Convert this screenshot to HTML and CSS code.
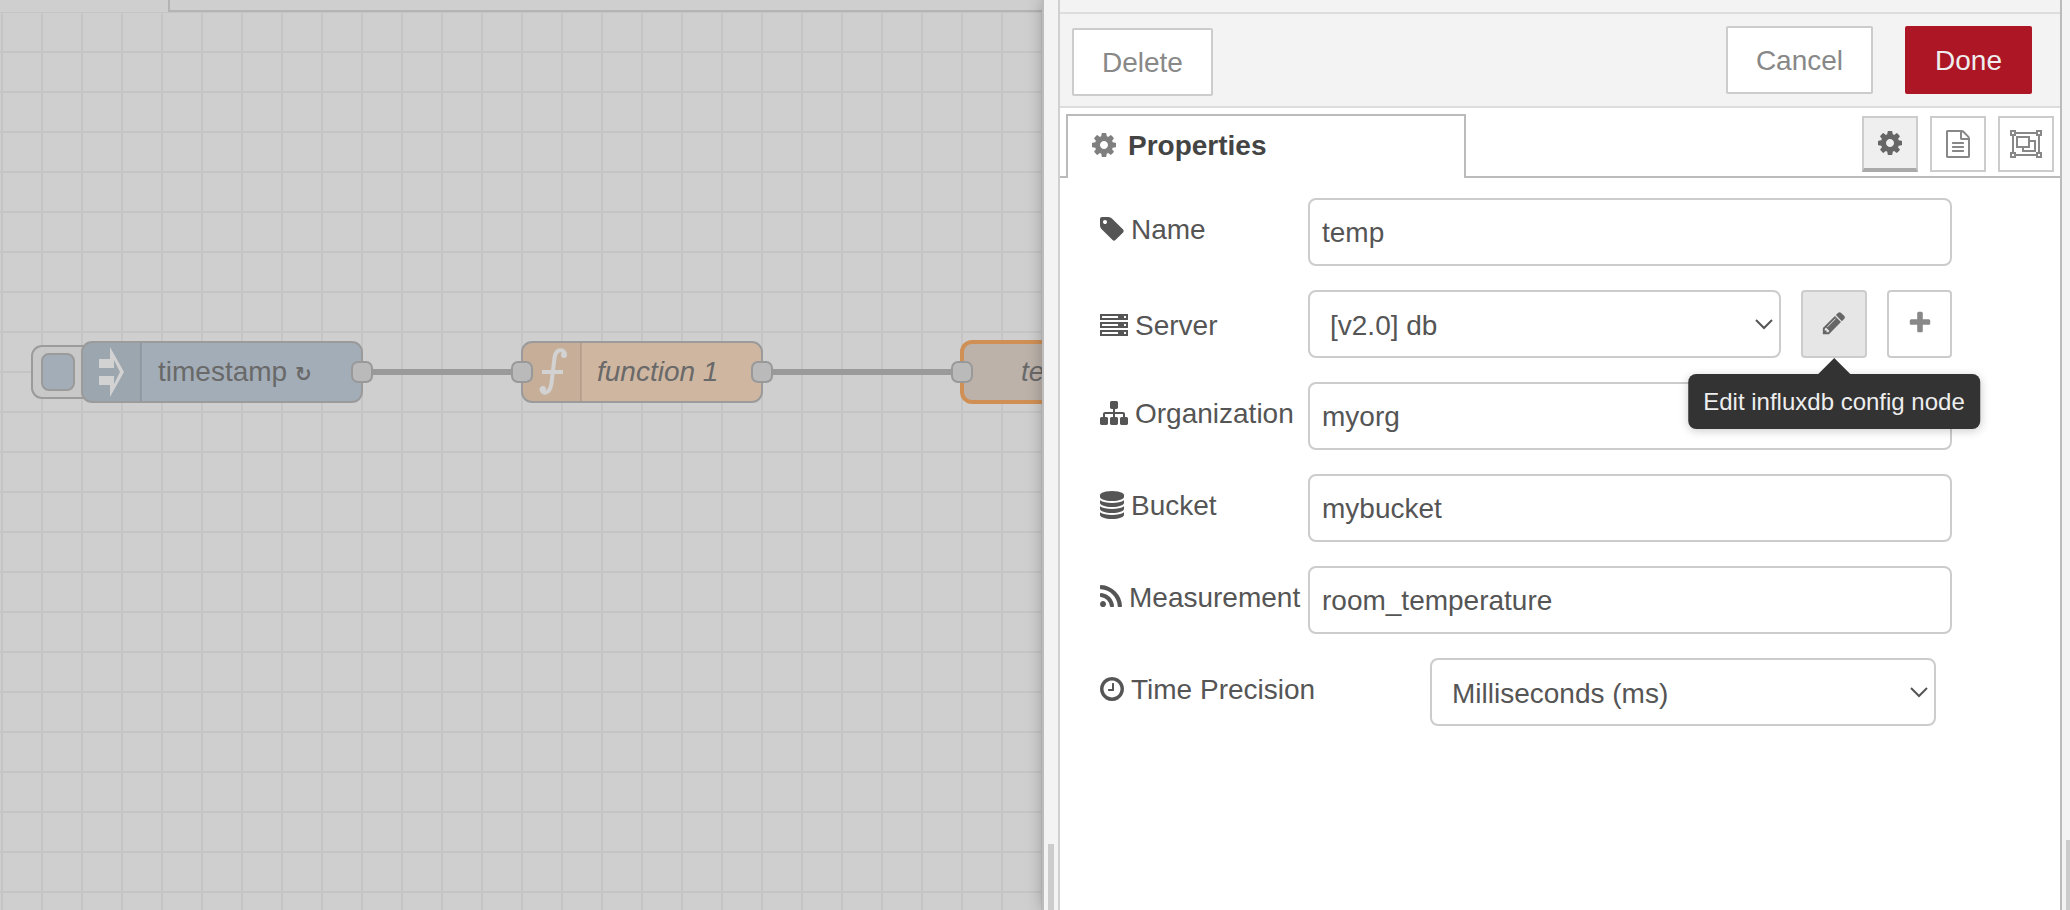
FILE: index.html
```html
<!DOCTYPE html>
<html lang="en">
<head>
<meta charset="utf-8">
<title>Edit influxdb out node</title>
<link rel="stylesheet" href="styles.css">
</head>
<body>
<main class="workspace">
  <div class="flow-tabs"><span class="flow-tab-active"></span><span class="flow-tab-rest"></span></div>
  <svg class="canvas" role="img" aria-label="Flow: timestamp, function 1, temp">
    <g transform="translate(0 -12)">
      <g class="wire">
        <path d="M362 372H522M762 372H962"/>
      </g>
      <g class="outline">
        <rect class="button-base" x="32" y="346" width="70" height="52" rx="10"/>
        <rect class="blue" x="42" y="354" width="32" height="36" rx="7"/>
        <rect class="blue" x="82" y="342" width="280" height="60" rx="10"/>
        <rect class="orange" x="522" y="342" width="240" height="60" rx="10"/>
        <rect class="sand selected" x="962" y="342" width="240" height="60" rx="10"/>
      </g>
      <path class="shade" d="M92 343H141V401H92a9 9 0 0 1-9-9V352a9 9 0 0 1 9-9zM532 343H581V401H532a9 9 0 0 1-9-9V352a9 9 0 0 1 9-9z"/>
      <path class="divider" d="M141 343V401M581 343V401"/>
      <path class="glyph" d="M99 359H110V347L124 372L110 397V385H99V376H114V384L120 372L114 360V368H99Z"/>
      <path class="glyph-line" d="M565 356C566 349 556 347 554.500 358L551.500 383C550 395 541 395 541.500 388M542 372H563"/>
      <circle class="glyph" cx="564" cy="355" r="3"/>
      <circle class="glyph" cx="543" cy="389" r="3"/>
      <g class="port">
        <rect x="352" y="362" width="20" height="20" rx="6"/>
        <rect x="512" y="362" width="20" height="20" rx="6"/>
        <rect x="752" y="362" width="20" height="20" rx="6"/>
        <rect x="952" y="362" width="20" height="20" rx="6"/>
      </g>
      <text class="node-label" x="158" y="381">timestamp <tspan class="repeat">↻</tspan></text>
      <text class="node-label italic" x="597" y="381">function 1</text>
      <text class="node-label italic" x="1021" y="381">temp</text>
    </g>
  </svg>
</main>
<div class="separator"><span class="grip"></span></div>
<section class="tray">
  <div class="tray-header"></div>
  <div class="toolbar">
    <button type="button" class="btn btn-delete">Delete</button>
    <div class="toolbar-end">
      <button type="button" class="btn">Cancel</button>
      <button type="button" class="btn btn-primary">Done</button>
    </div>
  </div>
  <div class="tabs">
    <button type="button" class="tab">
      <svg class="icon" viewBox="128 0 1536 1792" width="24" height="28"><path d="M1152 896q0-106-75-181t-181-75-181 75-75 181 75 181 181 75 181-75 75-181zm512-109v222q0 12-8 23t-20 13l-185 28q-19 54-39 91 35 50 107 138 10 12 10 25t-9 23q-27 37-99 108t-94 71q-12 0-26-9l-138-108q-44 23-91 38-16 136-29 186-7 28-36 28h-222q-14 0-24.500-8.500t-11.500-21.500l-28-184q-49-16-90-37l-141 107q-10 9-25 9-14 0-25-11-126-114-165-168-7-10-7-23 0-12 8-23 15-21 51-66.500t54-70.500q-27-50-41-99l-183-27q-13-2-21-12.500t-8-23.500v-222q0-12 8-23t19-13l186-28q14-46 39-92-40-57-107-138-10-12-10-24 0-10 9-23 26-36 98.500-107.500t94.500-71.500q13 0 26 10l138 107q44-23 91-38 16-136 29-186 7-28 36-28h222q14 0 24.500 8.500t11.500 21.500l28 184q49 16 90 37l142-107q9-9 24-9 13 0 25 10 129 119 165 170 7 8 7 22 0 12-8 23-15 21-51 66.500t-54 70.500q26 50 41 98l183 28q13 2 21 12.500t8 23.500z"/></svg>
      <span class="caption">Properties</span>
    </button>
    <div class="tab-tools">
      <button type="button" class="tool tool-active" aria-label="Properties">
        <svg class="icon" viewBox="128 0 1536 1792" width="24" height="28"><path d="M1152 896q0-106-75-181t-181-75-181 75-75 181 75 181 181 75 181-75 75-181zm512-109v222q0 12-8 23t-20 13l-185 28q-19 54-39 91 35 50 107 138 10 12 10 25t-9 23q-27 37-99 108t-94 71q-12 0-26-9l-138-108q-44 23-91 38-16 136-29 186-7 28-36 28h-222q-14 0-24.500-8.500t-11.500-21.500l-28-184q-49-16-90-37l-141 107q-10 9-25 9-14 0-25-11-126-114-165-168-7-10-7-23 0-12 8-23 15-21 51-66.500t54-70.500q-27-50-41-99l-183-27q-13-2-21-12.500t-8-23.500v-222q0-12 8-23t19-13l186-28q14-46 39-92-40-57-107-138-10-12-10-24 0-10 9-23 26-36 98.500-107.500t94.500-71.500q13 0 26 10l138 107q44-23 91-38 16-136 29-186 7-28 36-28h222q14 0 24.500 8.500t11.500 21.500l28 184q49 16 90 37l142-107q9-9 24-9 13 0 25 10 129 119 165 170 7 8 7 22 0 12-8 23-15 21-51 66.500t-54 70.500q26 50 41 98l183 28q13 2 21 12.500t8 23.500z"/></svg>
      </button>
      <button type="button" class="tool" aria-label="Description">
        <svg class="icon" viewBox="128 0 1536 1792" width="24" height="28"><path d="M1596 380q28 28 48 76t20 88v1152q0 40-28 68t-68 28h-1344q-40 0-68-28t-28-68v-1600q0-40 28-68t68-28h896q40 0 88 20t76 48zm-444-244v376h376q-10-29-22-41l-313-313q-12-12-41-22zm384 1528v-1024h-416q-40 0-68-28t-28-68v-416h-768v1536h1280zm-1024-864q0-14 9-23t23-9h704q14 0 23 9t9 23v64q0 14-9 23t-23 9h-704q-14 0-23-9t-9-23v-64zm736 224q14 0 23 9t9 23v64q0 14-9 23t-23 9h-704q-14 0-23-9t-9-23v-64q0-14 9-23t23-9h704zm0 256q14 0 23 9t9 23v64q0 14-9 23t-23 9h-704q-14 0-23-9t-9-23v-64q0-14 9-23t23-9h704z"/></svg>
      </button>
      <button type="button" class="tool" aria-label="Appearance">
        <svg class="icon-line" viewBox="0 0 32 28" width="32" height="28"><path d="M1 1h4v4H1zM27 1h4v4h-4zM1 23h4v4H1zM27 23h4v4h-4zM6 3h20M6 25h20M3 6v16M29 6v16M7 7h12v10H7zM20 11h5v10H13v-3"/></svg>
      </button>
    </div>
  </div>
  <form class="form">
    <div class="row">
      <label class="label" for="name">
        <svg class="icon" viewBox="128 0 1536 1792" width="24" height="28"><path d="M576 448q0-53-37.500-90.500t-90.500-37.500-90.500 37.500-37.500 90.500 37.500 90.500 90.500 37.500 90.500-37.500 37.500-90.500zm1067 576q0 53-37 90l-491 492q-39 37-91 37-53 0-90-37l-715-716q-38-37-64.500-101t-26.500-117v-416q0-52 38-90t90-38h416q53 0 117 26.500t102 64.500l715 714q37 39 37 91z"/></svg>
        <span class="caption">Name</span></label>
      <input class="field" id="name" type="text" value="temp">
    </div>
    <div class="row">
      <label class="label label-server" for="server">
        <svg class="icon" viewBox="0 0 28 28" width="28" height="28"><path fill-rule="evenodd" d="M0 3h28v6H0zM2 5v2h16V5zM24 5v2h2V5zM0 11h28v6H0zM2 13v2h16v-2zM24 13v2h2v-2zM0 19h28v6H0zM2 21v2h16v-2zM24 21v2h2v-2z"/></svg>
        <span class="caption">Server</span></label>
      <div class="select-box">
        <select class="field select" id="server"><option>[v2.0] db</option></select>
        <svg class="chevron" viewBox="0 0 18 12" width="18" height="12"><path d="M1 1l8 8 8-8"/></svg>
      </div>
      <div class="edit-box">
        <button type="button" class="square square-hover" aria-label="Edit" aria-describedby="tip">
          <svg class="icon" viewBox="0 0 1792 1792" width="26" height="26"><path d="M491 1536l91-91-235-235-91 91v107h128v128h107zm523-928q0-22-22-22-10 0-17 7l-542 542q-7 7-7 17 0 22 22 22 10 0 17-7l542-542q7-7 7-17zm-54-192l416 416-832 832h-416v-416zm683 96q0 53-37 90l-166 166-416-416 166-165q36-38 90-38 53 0 91 38l235 234q37 39 37 91z"/></svg>
        </button>
        <div class="tooltip" id="tip" role="tooltip">Edit influxdb config node</div>
      </div>
      <button type="button" class="square" aria-label="Add">
        <svg class="icon" viewBox="0 0 1792 1792" width="26" height="26"><path d="M1600 736v192q0 40-28 68t-68 28h-416v416q0 40-28 68t-68 28h-192q-40 0-68-28t-28-68v-416h-416q-40 0-68-28t-28-68v-192q0-40 28-68t68-28h416v-416q0-40 28-68t68-28h192q40 0 68 28t28 68v416h416q40 0 68 28t28 68z"/></svg>
      </button>
    </div>
    <div class="row">
      <label class="label" for="org">
        <svg class="icon" viewBox="0 0 1792 1792" width="28" height="28"><path d="M1792 1248v320q0 40-28 68t-68 28h-320q-40 0-68-28t-28-68v-320q0-40 28-68t68-28h96v-192h-512v192h96q40 0 68 28t28 68v320q0 40-28 68t-68 28h-320q-40 0-68-28t-28-68v-320q0-40 28-68t68-28h96v-192h-512v192h96q40 0 68 28t28 68v320q0 40-28 68t-68 28h-320q-40 0-68-28t-28-68v-320q0-40 28-68t68-28h96v-192q0-52 38-90t90-38h512v-192h-96q-40 0-68-28t-28-68v-320q0-40 28-68t68-28h320q40 0 68 28t28 68v320q0 40-28 68t-68 28h-96v192h512q52 0 90 38t38 90v192h96q40 0 68 28t28 68z"/></svg>
        <span class="caption">Organization</span></label>
      <input class="field" id="org" type="text" value="myorg">
    </div>
    <div class="row">
      <label class="label" for="bucket">
        <svg class="icon" viewBox="128 0 1536 1792" width="24" height="28"><path d="M896 768q237 0 443-43t325-127v170q0 69-103 128t-280 93.500-385 34.500-385-34.500-280-93.500-103-128v-170q119 84 325 127t443 43zm0 768q237 0 443-43t325-127v170q0 69-103 128t-280 93.500-385 34.500-385-34.500-280-93.500-103-128v-170q119 84 325 127t443 43zm0-384q237 0 443-43t325-127v170q0 69-103 128t-280 93.500-385 34.500-385-34.500-280-93.500-103-128v-170q119 84 325 127t443 43zm0-1152q208 0 385 34.500t280 93.500 103 128v128q0 69-103 128t-280 93.500-385 34.500-385-34.500-280-93.500-103-128v-128q0-69 103-128t280-93.500 385-34.500z"/></svg>
        <span class="caption">Bucket</span></label>
      <input class="field" id="bucket" type="text" value="mybucket">
    </div>
    <div class="row">
      <label class="label" for="measurement">
        <svg class="icon" viewBox="192 0 1408 1792" width="22" height="28"><path d="M576 1344q0 80-56 136t-136 56-136-56-56-136 56-136 136-56 136 56 56 136zm512 123q2 28-17 48-18 21-47 21h-135q-25 0-43-16.500t-20-41.500q-22-229-184.500-391.500t-391.500-184.500q-25-2-41.500-20t-16.500-43v-135q0-29 21-47 17-17 43-17h5q160 13 306 80.500t259 181.500q114 113 181.500 259t80.500 306zm512 2q2 27-18 47-18 20-46 20h-143q-26 0-44.500-17.500t-19.500-42.500q-12-215-101-408.500t-231.500-336-336-231.500-408.500-102q-25-1-42.500-19.500t-17.500-43.500v-143q0-28 20-46 18-18 44-18h3q262 13 501.500 120t425.500 294q187 186 294 425.500t120 501.500z"/></svg>
        <span class="caption">Measurement</span></label>
      <input class="field" id="measurement" type="text" value="room_temperature">
    </div>
    <div class="row row-precision">
      <label class="label label-wide" for="precision">
        <svg class="icon" viewBox="128 0 1536 1792" width="24" height="28"><path d="M1024 544v448q0 14-9 23t-23 9h-320q-14 0-23-9t-9-23v-64q0-14 9-23t23-9h224v-352q0-14 9-23t23-9h64q14 0 23 9t9 23zm416 352q0-148-73-273t-198-198-273-73-273 73-198 198-73 273 73 273 198 198 273 73 273-73 198-198 73-273zm224 0q0 209-103 385.500t-279.500 279.500-385.500 103-385.500-103-279.500-279.500-103-385.500 103-385.500 279.500-279.500 385.500-103 385.500 103 279.500 279.500 103 385.500z"/></svg>
        <span class="caption">Time Precision</span></label>
      <div class="select-box">
        <select class="field select" id="precision"><option>Milliseconds (ms)</option></select>
        <svg class="chevron" viewBox="0 0 18 12" width="18" height="12"><path d="M1 1l8 8 8-8"/></svg>
      </div>
    </div>
  </form>
</section>
<div class="edge"><span class="edge-grip"></span></div>
</body>
</html>
```
FILE: styles.css
```css
* { box-sizing: border-box; }

body {
  margin: 0;
  height: 100vh;
  display: flex;
  overflow: hidden;
  background: #fff;
  color: #555;
  font: 28px "Liberation Sans", Arial, sans-serif;
}

button, input, select { font: inherit; color: inherit; margin: 0; }
svg { display: block; flex: none; }
.icon { fill: currentColor; }
.icon-line { fill: none; stroke: currentColor; stroke-width: 2; }

/* Workspace */
.workspace {
  flex: 1042 1 0;
  min-width: 0;
  display: flex;
  flex-direction: column;
  background: #cfcfcf;
}
.flow-tabs { display: flex; height: 12px; }
.flow-tab-active { width: 168px; }
.flow-tab-rest {
  flex: 1;
  border-left: 2px solid #b4b4b4;
  border-bottom: 2px solid #b4b4b4;
}
.canvas {
  flex: 1;
  width: 100%;
  min-height: 0;
  background-image:
    linear-gradient(#c5c5c5 2px, transparent 2px),
    linear-gradient(90deg, #c5c5c5 2px, transparent 2px);
  background-size: 40px 40px;
  background-position: 1px -1px;
}
.wire { stroke: #9a9a9a; stroke-width: 6; }
.outline { stroke: #9b9b9b; stroke-width: 2; }
.button-base { fill: #c8c8c8; }
.blue { fill: #a3adb7; }
.orange { fill: #cfb6a0; }
.sand { fill: #bcb2aa; }
.selected { stroke: #d09055; stroke-width: 4; }
.shade { fill: #000; fill-opacity: 0.04; }
.divider { stroke: #000; stroke-opacity: 0.09; stroke-width: 2; }
.glyph { fill: #d2d2d2; }
.glyph-line { fill: none; stroke: #d2d2d2; stroke-width: 4; }
.port { fill: #bababa; stroke: #999; stroke-width: 2; }
.node-label {
  fill: #696969;
  font-family: "Liberation Sans", "DejaVu Sans", sans-serif;
}
.italic { font-style: italic; }
.repeat { font-size: 20px; font-weight: bold; }

/* Separator */
.separator {
  z-index: 1;
  flex: none;
  width: 18px;
  display: flex;
  align-items: flex-end;
  justify-content: center;
  background: #f3f3f3;
  border-left: 2px solid #bcbcbc;
  border-right: 2px solid #d0d0d0;
  box-shadow: 0 0 16px rgba(0, 0, 0, 0.25);
  clip-path: inset(0 0 0 -30px);
}
.grip { width: 6px; height: 66px; background: #ccc; }

/* Tray */
.tray { flex: 1000 1 0; min-width: 0; }
.tray-header { height: 14px; background: #f3f3f3; border-bottom: 2px solid #ddd; }
.toolbar {
  display: flex;
  align-items: flex-start;
  justify-content: space-between;
  padding: 12px 28px 12px 12px;
  background: #f3f3f3;
  border-bottom: 2px solid #ddd;
}
.toolbar-end { display: flex; gap: 32px; }
.btn {
  height: 68px;
  padding: 2px 28px 0;
  background: #fff;
  color: #888;
  border: 2px solid #ccc;
  border-radius: 2px;
}
.btn-delete { margin-top: 2px; margin-bottom: -2px; }
.btn-primary { background: #ad1625; border-color: #ad1625; color: #eee; }

.tabs {
  display: flex;
  justify-content: space-between;
  height: 70px;
  padding: 6px 6px 0;
  border-bottom: 2px solid #bbb;
}
.tab {
  width: 400px;
  height: 64px;
  padding: 0 24px 4px;
  display: flex;
  align-items: center;
  gap: 12px;
  background: #fff;
  border: 2px solid #bbb;
  border-bottom: 0;
  color: #444;
  font-weight: bold;
}
.tab .icon { color: #7f7f7f; }
.caption { padding-top: 2px; }
.tab-tools { display: flex; gap: 12px; padding-top: 2px; }
.tool {
  width: 56px;
  height: 56px;
  padding: 0;
  display: flex;
  align-items: center;
  justify-content: center;
  background: #fff;
  border: 2px solid #ccc;
  color: #888;
}
.tool-active { background: #efefef; border-bottom: 4px solid #aaa; color: #666; }

/* Form */
.form {
  display: flex;
  flex-direction: column;
  gap: 24px;
  padding: 20px 108px 20px 40px;
}
.row { display: flex; }
.row-precision { padding-right: 16px; }
.label {
  flex: none;
  width: 208px;
  height: 68px;
  padding-bottom: 6px;
  display: flex;
  align-items: center;
  gap: 7px;
  white-space: nowrap;
}
.label-server { padding: 2px 0 0; }
.label-wide { width: 330px; }
.field {
  flex: 1;
  width: 100%;
  min-width: 0;
  height: 68px;
  padding: 2px 12px 0;
  background: #fff;
  border: 2px solid #ccc;
  border-radius: 8px;
}
.select-box { flex: 1; min-width: 0; position: relative; }
.select { appearance: none; padding: 2px 36px 0 20px; }
.chevron {
  position: absolute;
  right: 8px;
  top: 29px;
  fill: none;
  stroke: #555;
  stroke-width: 2;
  pointer-events: none;
}
.square {
  width: 65px;
  height: 68px;
  margin-left: 20px;
  padding: 0 0 2px;
  display: flex;
  align-items: center;
  justify-content: center;
  background: #fff;
  border: 2px solid #ccc;
  border-radius: 4px;
  color: #888;
}
.square-hover { width: 66px; background: #e6e6e6; color: #666; }
.edit-box { position: relative; }
.tooltip {
  position: absolute;
  z-index: 2;
  top: 84px;
  left: 53px;
  transform: translateX(-50%);
  padding: 0 15px;
  background: #333;
  border-radius: 8px;
  color: #eee;
  font-size: 24px;
  line-height: 55px;
  white-space: nowrap;
  box-shadow: 0 2px 10px rgba(0, 0, 0, 0.2);
}
.tooltip::before {
  content: "";
  position: absolute;
  top: -16px;
  left: 50%;
  margin-left: -16px;
  border: 16px solid transparent;
  border-top: 0;
  border-bottom-color: #333;
}

/* Right edge */
.edge {
  flex: none;
  width: 10px;
  display: flex;
  align-items: flex-end;
  justify-content: flex-end;
  background: #f3f3f3;
  border-left: 2px solid #bbb;
}
.edge-grip { width: 4px; height: 70px; background: #ccc; }
```
